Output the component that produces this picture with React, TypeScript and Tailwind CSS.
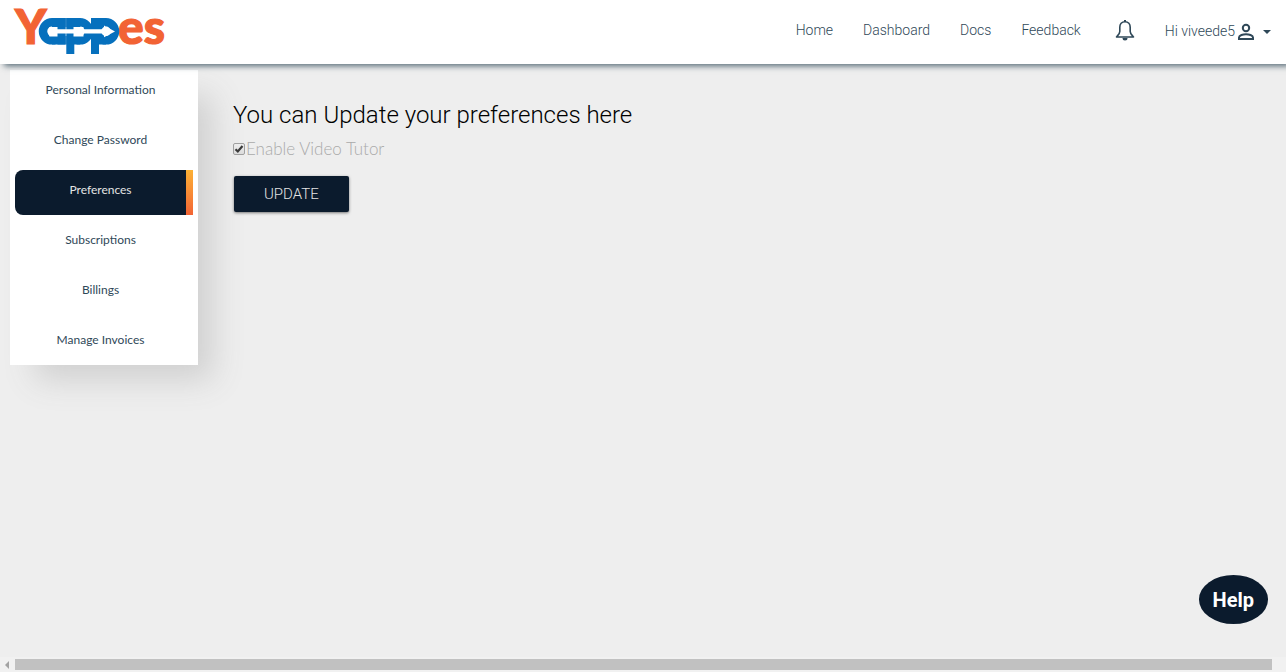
import { useState } from "react";

const navLinks = ["Home", "Dashboard", "Docs", "Feedback"];

const menuItems = [
  "Personal Information",
  "Change Password",
  "Preferences",
  "Subscriptions",
  "Billings",
  "Manage Invoices",
];

function Logo() {
  return (
    <svg className="overflow-visible" width="150" height="48" viewBox="15 8 150 48" role="img" aria-label="Yappes">
      <g fontFamily="Lato, sans-serif" fontWeight="900" fontSize="48" fill="#f26334" stroke="#f26334" strokeWidth="1.2">
        <text x="15" y="44">Y</text>
        <text x="118" y="44">es</text>
      </g>
      <g fill="none" stroke="#0670bd" strokeWidth="8.5">
        <circle cx="52" cy="31.3" r="9" />
        <circle cx="80" cy="31.3" r="9" />
        <circle cx="106" cy="31.3" r="9" />
      </g>
      <g fill="#0670bd">
        <rect x="52" y="18" width="13.700" height="9" />
        <rect x="52" y="36" width="13.700" height="8.500" />
        <rect x="66.300" y="18" width="14" height="9" />
        <rect x="66.300" y="36" width="14" height="8.500" />
        <rect x="92" y="18" width="14" height="9" />
        <rect x="92" y="36" width="14" height="8.500" />
        <rect x="57.500" y="18" width="8.200" height="26.500" />
        <rect x="66.300" y="18" width="8" height="36" />
        <rect x="91" y="18" width="8" height="36" />
      </g>
      <path
        d="M49.500 27h8v2.300h16V27h10v2.300h20.500v-3.800l11 5.900-11 5.900v-3.800h-20.500v3h-10v-3h-16v3h-8q-2.500-4.800 0-9.500z"
        fill="#fff"
      />
    </svg>
  );
}

function BellIcon() {
  return (
    <svg width="20" height="22" viewBox="0 0 20 22" fill="none" stroke="#2f4858" strokeWidth="1.6" aria-hidden="true">
      <path d="M10 1.800c-3.300 0-5.200 2.400-5.200 5.400v4.300c0 2-1.500 3.300-3.300 5.500h17c-1.800-2.200-3.300-3.500-3.300-5.500V7.200c0-3-1.900-5.400-5.200-5.400z" strokeLinejoin="round" />
      <path d="M7.500 18h5a2.500 2.500 0 0 1-5 0z" fill="#2f4858" stroke="none" />
      <path d="M10 0v2" strokeWidth="2" />
    </svg>
  );
}

function PersonIcon() {
  return (
    <svg width="18" height="18" viewBox="0 0 18 18" fill="none" stroke="#2f4858" strokeWidth="2" aria-hidden="true">
      <circle cx="9" cy="5" r="3.200" />
      <path d="M2 16v-1.600c0-2 4.200-3.200 7-3.200s7 1.200 7 3.200V16z" />
    </svg>
  );
}

export default function App() {
  const [active, setActive] = useState("Preferences");
  const [tutor, setTutor] = useState(true);

  return (
    <div className="flex min-h-screen flex-col bg-[#eeeeee] font-[Roboto,sans-serif]">
      <header className="relative flex h-16 items-center justify-between bg-white pr-[15px] pl-[15px] shadow-[4px_2px_6px_#2f4858cc]">
        <a href="#home" aria-label="Yappes">
          <Logo />
        </a>
        <nav className="flex items-center text-sm font-light text-[#2f4858]">
          <div className="flex gap-[30px] pb-1">
            {navLinks.map((link) => (
              <a key={link} href={"#" + link.toLowerCase()}>
                {link}
              </a>
            ))}
          </div>
          <button type="button" aria-label="Notifications" className="mr-[30px] ml-[34px] pb-0.5">
            <BellIcon />
          </button>
          <button type="button" className="flex items-center gap-0.5">
            <span className="pb-0.5">Hi viveede5</span>
            <PersonIcon />
            <svg className="ml-1.5" width="8" height="4" viewBox="0 0 8 4" aria-hidden="true">
              <path d="M0 0h8l-4 4z" fill="#2f4858" />
            </svg>
          </button>
        </nav>
      </header>

      <main className="flex flex-1 items-start gap-[35px] px-2.5 pt-1.5">
        <aside className="w-[188px] shrink-0 bg-white px-[5px] shadow-[20px_20px_30px_-5px_#d0d0d0]">
          <ul className="flex flex-col gap-[5px] font-[Lato,sans-serif] text-xs">
            {menuItems.map((item) => (
              <li key={item}>
                <button
                  type="button"
                  onClick={() => setActive(item)}
                  className={
                    item === active
                      ? "flex h-[45px] w-full items-stretch overflow-hidden rounded-l-lg bg-[#0b1b2d] text-[#e4e4e4]"
                      : "flex h-[45px] w-full items-stretch text-[#2f4858]"
                  }
                >
                  <span className="flex-1 pt-3 leading-4">{item}</span>
                  <span
                    className={
                      item === active
                        ? "w-[7px] bg-linear-to-b from-[#fbb034] to-[#f26334]"
                        : "w-[7px]"
                    }
                  />
                </button>
              </li>
            ))}
          </ul>
        </aside>

        <section className="flex flex-col items-start pt-[29px]">
          <h1 className="text-2xl leading-8 font-light text-black">You can Update your preferences here</h1>
          <label className="mt-1.5 flex items-center gap-px font-[Lato,sans-serif] text-[17px] leading-6 font-light text-[#aaaaaa]">
            <span className="relative flex">
              <input
                type="checkbox"
                checked={tutor}
                onChange={(e) => setTutor(e.target.checked)}
                className="peer size-3 appearance-none rounded-xs border border-[#a0a0a0] bg-linear-to-b from-[#eeeeee] to-[#dcdcdc]"
              />
              <svg
                className="pointer-events-none absolute inset-0 hidden peer-checked:block"
                width="12"
                height="12"
                viewBox="0 0 12 12"
                fill="none"
                stroke="#3a3a3a"
                strokeWidth="2.2"
                aria-hidden="true"
              >
                <path d="M2.500 6.300l2.300 2.200L9.500 3" />
              </svg>
            </span>
            Enable Video Tutor
          </label>
          <button
            type="button"
            className="mt-[15px] ml-px h-9 rounded-xs bg-[#0b1b2d] px-[30px] text-[15px] font-light text-[#e4e4e4] shadow-[0_1px_3px_#00000080]"
          >
            UPDATE
          </button>
        </section>
      </main>

      <button
        type="button"
        className="fixed right-[18px] bottom-12 h-[49px] rounded-[50%] bg-[#0b1b2d] px-3.5 text-xl font-bold text-white"
      >
        Help
      </button>

      <footer className="flex h-[15px] items-center bg-[#f1f1f1] pr-3.5 pl-[5px]">
        <svg className="mr-1.5 shrink-0" width="4" height="8" viewBox="0 0 4 8" aria-hidden="true">
          <path d="M4 0v8L0 4z" fill="#a3a3a3" />
        </svg>
        <div className="h-[11px] flex-1 bg-[#c1c1c1]" />
      </footer>
    </div>
  );
}
